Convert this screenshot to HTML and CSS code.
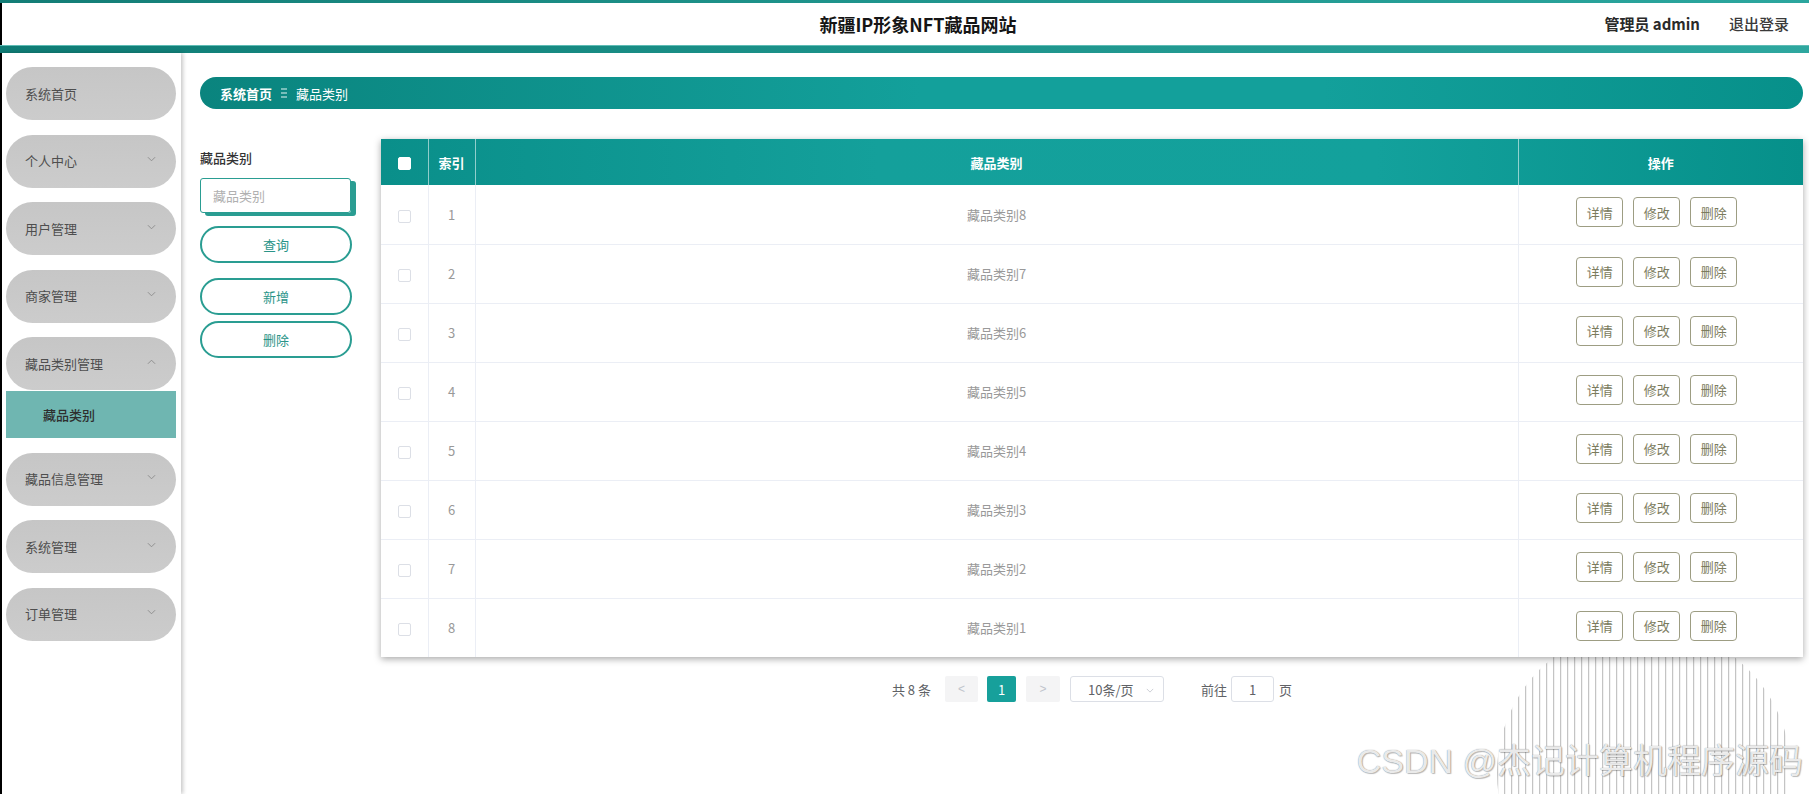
FILE: index.html
```html
<!DOCTYPE html>
<html lang="zh-CN">
<head>
<meta charset="utf-8">
<title>新疆IP形象NFT藏品网站</title>
<link rel="stylesheet" href="styles.css">
</head>
<body>
<div class="topbar"></div>
<header class="header">
  <div class="header-spacer"></div>
  <div class="title">新疆IP形象NFT藏品网站</div>
  <div class="user">
    <span class="user-name">管理员 admin</span>
    <span class="logout">退出登录</span>
  </div>
</header>
<div class="band"></div>
<div class="layout">
  <aside class="sidebar">
    <div class="menu-item"><span>系统首页</span></div>
    <div class="menu-item"><span>个人中心</span><svg class="chev" viewBox="0 0 10 6"><path d="M1 1 L5 5 L9 1"/></svg></div>
    <div class="menu-item"><span>用户管理</span><svg class="chev" viewBox="0 0 10 6"><path d="M1 1 L5 5 L9 1"/></svg></div>
    <div class="menu-item"><span>商家管理</span><svg class="chev" viewBox="0 0 10 6"><path d="M1 1 L5 5 L9 1"/></svg></div>
    <div class="menu-group">
      <div class="menu-item"><span>藏品类别管理</span><svg class="chev" viewBox="0 0 10 6"><path d="M1 5 L5 1 L9 5"/></svg></div>
      <div class="submenu-item">藏品类别</div>
    </div>
    <div class="menu-item"><span>藏品信息管理</span><svg class="chev" viewBox="0 0 10 6"><path d="M1 1 L5 5 L9 1"/></svg></div>
    <div class="menu-item"><span>系统管理</span><svg class="chev" viewBox="0 0 10 6"><path d="M1 1 L5 5 L9 1"/></svg></div>
    <div class="menu-item"><span>订单管理</span><svg class="chev" viewBox="0 0 10 6"><path d="M1 1 L5 5 L9 1"/></svg></div>
  </aside>
  <main class="main">
    <div class="breadcrumb">
      <span class="crumb-home">系统首页</span>
      <svg class="crumb-sep" viewBox="0 0 6 10"><path d="M0 1 H6 M0 5 H6 M0 9 H6"/></svg>
      <span class="crumb-cur">藏品类别</span>
    </div>
    <div class="content">
      <div class="form">
        <div class="form-label">藏品类别</div>
        <div class="input-box">藏品类别</div>
        <button class="pill-btn btn-query">查询</button>
        <button class="pill-btn btn-add">新增</button>
        <button class="pill-btn btn-del">删除</button>
      </div>
      <div class="table-area">
        <div class="table-card">
          <table class="grid">
            <colgroup>
              <col class="c-check"><col class="c-index"><col><col class="c-ops">
            </colgroup>
            <thead>
              <tr><th><span class="check check-head"></span></th><th>索引</th><th>藏品类别</th><th>操作</th></tr>
            </thead>
            <tbody>
              <tr><td><span class="check"></span></td><td>1</td><td>藏品类别8</td><td><div class="ops"><button class="op">详情</button><button class="op">修改</button><button class="op">删除</button></div></td></tr>
              <tr><td><span class="check"></span></td><td>2</td><td>藏品类别7</td><td><div class="ops"><button class="op">详情</button><button class="op">修改</button><button class="op">删除</button></div></td></tr>
              <tr><td><span class="check"></span></td><td>3</td><td>藏品类别6</td><td><div class="ops"><button class="op">详情</button><button class="op">修改</button><button class="op">删除</button></div></td></tr>
              <tr><td><span class="check"></span></td><td>4</td><td>藏品类别5</td><td><div class="ops"><button class="op">详情</button><button class="op">修改</button><button class="op">删除</button></div></td></tr>
              <tr><td><span class="check"></span></td><td>5</td><td>藏品类别4</td><td><div class="ops"><button class="op">详情</button><button class="op">修改</button><button class="op">删除</button></div></td></tr>
              <tr><td><span class="check"></span></td><td>6</td><td>藏品类别3</td><td><div class="ops"><button class="op">详情</button><button class="op">修改</button><button class="op">删除</button></div></td></tr>
              <tr><td><span class="check"></span></td><td>7</td><td>藏品类别2</td><td><div class="ops"><button class="op">详情</button><button class="op">修改</button><button class="op">删除</button></div></td></tr>
              <tr><td><span class="check"></span></td><td>8</td><td>藏品类别1</td><td><div class="ops"><button class="op">详情</button><button class="op">修改</button><button class="op">删除</button></div></td></tr>
            </tbody>
          </table>
        </div>
        <div class="pager">
          <span class="total">共 8 条</span>
          <span class="pg-btn pg-prev">&lt;</span>
          <span class="pg-num">1</span>
          <span class="pg-btn pg-next">&gt;</span>
          <span class="pg-size">10条/页<svg class="pg-arrow" viewBox="0 0 10 6"><path d="M1 1 L5 5 L9 1"/></svg></span>
          <span class="pg-goto">前往</span>
          <span class="pg-input">1</span>
          <span class="pg-unit">页</span>
        </div>
      </div>
    </div>
  </main>
</div>
<div class="wm-stripes"></div>
<div class="watermark">CSDN @杰记计算机程序源码</div>
</body>
</html>
```
FILE: styles.css
```css
* { box-sizing: border-box; }
html, body { margin: 0; padding: 0; overflow: hidden; }
body {
  width: 1809px;
  height: 794px;
  background: #fff;
  font-family: "Noto Sans CJK SC", "Liberation Sans", sans-serif;
  font-size: 13px;
  color: #333;
  position: relative;
}
.topbar {
  height: 3px;
  background: linear-gradient(90deg, #137d76 0%, #1f958d 50%, #2ba69e 100%);
}
.header {
  height: 42px;
  border-left: 2px solid #000;
  display: grid;
  grid-template-columns: 1fr auto 1fr;
  align-items: center;
  padding: 0 20px 0 45px;
}
.title {
  font-size: 18px;
  font-weight: 700;
  color: #151515;
  line-height: 22px;
}
.user {
  justify-self: end;
  display: flex;
  align-items: center;
  gap: 29px;
  font-size: 15px;
  line-height: 20px;
}
.user-name { font-weight: 700; color: #2a2a2a; }
.logout { color: #3a3a3a; font-weight: 500; }
.band {
  height: 8px;
  background: linear-gradient(90deg, #0f7c75 0%, #1b9189 45%, #2ea79f 100%);
  border-top: 1px solid #5fbcb5;
}
.layout {
  display: flex;
  height: 741px;
}
.sidebar {
  width: 181px;
  flex: none;
  border-left: 2px solid #000;
  padding: 14px 5px 0 4px;
  box-shadow: 2px 0 4px rgba(0,0,0,0.22);
  display: flex;
  flex-direction: column;
  gap: 14.5px;
  position: relative;
  z-index: 1;
}
.menu-item {
  height: 53px;
  border-radius: 27px;
  background: linear-gradient(180deg, #c6c6c6 0%, #cccccc 100%);
  display: flex;
  align-items: center;
  justify-content: space-between;
  padding: 0 20px 0 19px;
  color: #4e4e4e;
  font-size: 13px;
}
.menu-item span { line-height: 18px; }
.chev {
  width: 9px;
  height: 6px;
  fill: none;
  stroke: #8a8a8a;
  stroke-width: 1;
  margin-top: -4px;
}
.menu-group { display: flex; flex-direction: column; gap: 1px; }
.submenu-item {
  height: 47px;
  background: #6fb6b1;
  display: flex;
  align-items: center;
  padding-left: 37px;
  color: #2e2e2e;
  font-weight: 500;
  font-size: 13px;
}
.main {
  flex: 1;
  padding: 24px 6px 0 19px;
}
.breadcrumb {
  height: 32px;
  border-radius: 16px;
  background: linear-gradient(90deg, #0a847e 0%, #13a09b 45%, #13a09b 70%, #07908a 100%);
  display: flex;
  align-items: center;
  padding-left: 20px;
  color: #fff;
  font-size: 13px;
}
.crumb-home { font-weight: 700; }
.crumb-sep {
  width: 6px;
  height: 10px;
  margin: 0 9px 0 9px;
  stroke: #e4f4f3;
  stroke-width: 1;
  fill: none;
}
.crumb-cur { font-weight: 400; }
.content {
  display: flex;
  gap: 29px;
  margin-top: 30px;
}
.form {
  width: 152px;
  flex: none;
  display: flex;
  flex-direction: column;
  padding-top: 11px;
}
.form-label {
  font-size: 13px;
  line-height: 16px;
  color: #333;
  font-weight: 500;
}
.input-box {
  margin-top: 12px;
  width: 151px;
  height: 35px;
  border: 1px solid #2a9d92;
  border-radius: 3px;
  box-shadow: 5px 3px 0 #2a9d92;
  padding-left: 12px;
  display: flex;
  align-items: center;
  color: #b0b0b0;
  font-size: 13px;
}
.pill-btn {
  width: 152px;
  height: 37px;
  border: 2px solid #2a9d92;
  border-radius: 19px;
  background: #fff;
  color: #2a9488;
  font-family: inherit;
  font-size: 13px;
  padding: 0;
}
.btn-query { margin-top: 13px; }
.btn-add { margin-top: 15px; }
.btn-del { margin-top: 6px; }
.table-area {
  flex: 1;
  display: flex;
  flex-direction: column;
}
.table-card {
  background: #fff;
  box-shadow: 0 2px 7px rgba(0,0,0,0.35);
  position: relative;
  z-index: 2;
}
.grid {
  width: 100%;
  border-collapse: collapse;
  table-layout: fixed;
}
.c-check { width: 47px; }
.c-index { width: 47px; }
.c-ops { width: 285px; }
.grid thead tr {
  height: 46px;
  background: linear-gradient(90deg, #0a8f8a 0%, #14a09b 35%, #13a19c 70%, #06908a 100%);
}
.grid th {
  color: #fff;
  font-weight: 700;
  font-size: 13px;
  text-align: center;
  border-left: 1px solid rgba(255,255,255,0.55);
  padding: 0;
}
.grid th:first-child { border-left: none; }
.grid td {
  height: 59px;
  text-align: center;
  color: #999;
  font-size: 13px;
  border-bottom: 1px solid #ebeef5;
  border-left: 1px solid #ebeef5;
  padding: 0;
}
.grid td:first-child { border-left: none; }
.grid tbody tr:last-child td { border-bottom: none; }
.check {
  display: inline-block;
  width: 13px;
  height: 13px;
  border: 1px solid #dcdfe6;
  border-radius: 2px;
  background: #fff;
  vertical-align: middle;
}
.check-head { border-color: #fff; }
.ops {
  display: flex;
  justify-content: center;
  gap: 10px;
  padding-right: 8px;
  margin-top: -4px;
}
.op {
  width: 47px;
  height: 30px;
  border: 1px solid #9d9d83;
  border-radius: 4px;
  background: #fff;
  color: #7b7b5d;
  font-family: inherit;
  font-size: 13px;
  padding: 0;
}
.pager {
  display: flex;
  align-items: center;
  justify-content: center;
  margin-top: 19px;
  color: #606266;
  font-size: 13px;
}
.total { margin-right: 14px; }
.pg-btn {
  width: 33px;
  height: 26px;
  background: #f4f4f5;
  color: #c0c4cc;
  display: flex;
  align-items: center;
  justify-content: center;
  font-family: "Liberation Sans", sans-serif;
  font-size: 12px;
  border-radius: 2px;
}
.pg-prev { margin-right: 9px; }
.pg-next { margin-right: 10px; width: 34px; }
.pg-num {
  width: 29px;
  height: 26px;
  background: #17a09b;
  color: #fff;
  display: flex;
  align-items: center;
  justify-content: center;
  border-radius: 2px;
  margin-right: 10px;
}
.pg-size {
  width: 94px;
  height: 26px;
  border: 1px solid #dcdfe6;
  border-radius: 3px;
  display: flex;
  align-items: center;
  padding-left: 17px;
  margin-right: 37px;
  position: relative;
}
.pg-arrow {
  position: absolute;
  right: 9px;
  top: 11px;
  width: 8px;
  height: 5px;
  fill: none;
  stroke: #c0c4cc;
  stroke-width: 1;
}
.pg-goto { margin-right: 4px; }
.pg-input {
  width: 43px;
  height: 26px;
  border: 1px solid #dcdfe6;
  border-radius: 3px;
  display: flex;
  align-items: center;
  justify-content: center;
  margin-right: 5px;
}
.wm-stripes {
  position: absolute;
  left: 1497px;
  top: 626px;
  width: 294px;
  height: 168px;
  clip-path: circle(147px at 147px 147px);
  background: repeating-linear-gradient(90deg, #c4c4c4 0 1px, #f2f2f2 1px 2px, transparent 2px 7px);
  z-index: 0;
}
.watermark {
  position: absolute;
  right: 6px;
  top: 743px;
  font-family: "Liberation Sans", "Noto Sans CJK SC", sans-serif;
  font-size: 34px;
  line-height: 36px;
  color: rgba(250,250,250,0.9);
  text-shadow: 0 0 1px #777, 1px 1px 1px rgba(0,0,0,0.25);
  white-space: nowrap;
  z-index: 3;
}
```
